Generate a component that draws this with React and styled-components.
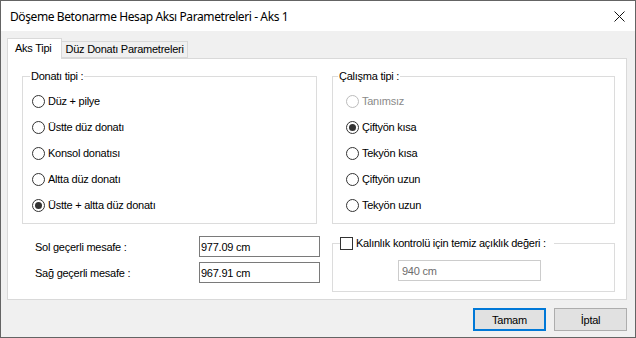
import React from "react";
import styled, { createGlobalStyle } from "styled-components";

const Global = createGlobalStyle`
  html, body { margin: 0; padding: 0; background: #ffffff; }
  * { box-sizing: border-box; }
`;

const Window = styled.div`
  width: 636px;
  height: 338px;
  border: 1px solid #646464;
  display: flex;
  flex-direction: column;
  background: #f0f0f0;
  font-family: "Liberation Sans", Arial, sans-serif;
  font-size: 11px;
  letter-spacing: -0.25px;
  color: #000;
`;

const TitleBar = styled.div`
  height: 30px;
  background: #fff;
  display: flex;
  align-items: center;
  justify-content: space-between;
  padding: 0 10px 0 9px;
`;

const Title = styled.span`
  font-family: "Noto Sans", "Liberation Sans", sans-serif;
  font-size: 12px;
  letter-spacing: -0.4px;
  color: #000;
  margin-top: 1px;
`;

const Body = styled.div`
  flex: 1;
  display: flex;
  flex-direction: column;
  padding: 7px 8px 6px 6px;
`;

const TabStrip = styled.div`
  display: flex;
  align-items: flex-end;
  height: 20px;
`;

const Tab = styled.div`
  position: relative;
  z-index: ${(p) => (p.$active ? 2 : 1)};
  height: ${(p) => (p.$active ? "21px" : "17px")};
  margin-bottom: ${(p) => (p.$active ? "-1px" : "0")};
  padding: ${(p) => (p.$active ? "3px 9px 0 7px" : "1px 3px 0 4px")};
  background: ${(p) => (p.$active ? "#fff" : "#f0f0f0")};
  border: 1px solid #d9d9d9;
  border-bottom: ${(p) => (p.$active ? "none" : "1px solid #d9d9d9")};
  border-left: ${(p) => (p.$first ? "1px solid #d9d9d9" : "none")};
  white-space: nowrap;
  line-height: 13px;
`;

const Panel = styled.div`
  height: 242px;
  background: #fff;
  border: 1px solid #d9d9d9;
  padding: 11px 11px 0 14px;
  display: grid;
  grid-template-columns: 295px 283px;
  grid-template-rows: 154px auto;
  column-gap: 15px;
  row-gap: 12px;
`;

const Group = styled.fieldset`
  margin: 0;
  padding: ${(p) => p.$pad || "6px 0 5px 0"};
  border: 1px solid #dcdcdc;
  min-width: 0;
  align-self: start;
`;

const Legend = styled.legend`
  margin-left: ${(p) => p.$ml || "6px"};
  padding: ${(p) => p.$pad || "0 1px"};
  line-height: ${(p) => p.$lh || "12px"};
  display: flex;
  align-items: center;
  gap: 3px;
`;

const RadioRow = styled.div`
  height: 26px;
  display: flex;
  align-items: center;
  padding-left: ${(p) => p.$indent}px;
  gap: 3px;
  color: ${(p) => (p.$disabled ? "#8a8a8a" : "#000")};
`;

const RadioCircle = styled.span`
  width: 13px;
  height: 13px;
  border-radius: 50%;
  border: 1px solid ${(p) => (p.$disabled ? "#bcbcbc" : "#333")};
  background: #fff;
  display: flex;
  align-items: center;
  justify-content: center;
  flex: none;
  &::after {
    content: "";
    width: 7px;
    height: 7px;
    border-radius: 50%;
    background: ${(p) => (p.$checked ? "#333" : "transparent")};
  }
`;

const CheckBox = styled.span`
  width: 13px;
  height: 13px;
  border: 1px solid #333;
  background: #fff;
  flex: none;
`;

const FieldRows = styled.div`
  display: flex;
  flex-direction: column;
  gap: 5px;
`;

const FieldRow = styled.div`
  display: grid;
  grid-template-columns: 164px 121px;
  align-items: center;
  padding-left: 13px;
`;

const TextBox = styled.div`
  height: 21px;
  width: ${(p) => p.$w || 121}px;
  margin-left: ${(p) => p.$ml || 0}px;
  border: 1px solid ${(p) => (p.$disabled ? "#cccccc" : "#7a7a7a")};
  background: #ffffff;
  color: ${(p) => (p.$disabled ? "#6d6d6d" : "#000")};
  display: flex;
  align-items: center;
  padding-left: ${(p) => p.$pl || 1}px;
`;

const CheckGroup = styled(Group)`
  height: 56px;
`;

const ButtonRow = styled.div`
  display: flex;
  justify-content: flex-end;
  gap: 8px;
  margin-top: 8px;
`;

const Button = styled.button`
  width: 73px;
  height: 23px;
  font: inherit;
  letter-spacing: inherit;
  color: #000;
  background: #e1e1e1;
  border: ${(p) => (p.$default ? "2px solid #0078d7" : "1px solid #adadad")};
  padding: 0;
  margin: 0;
`;

const CloseIcon = () => (
  <svg width="11" height="11" viewBox="0 0 11 11">
    <path d="M0.5 0.5 L10.5 10.5 M10.5 0.5 L0.5 10.5" stroke="#111" strokeWidth="1" fill="none" />
  </svg>
);

const donati = [
  "Düz + pilye",
  "Üstte düz donatı",
  "Konsol donatısı",
  "Altta düz donatı",
  "Üstte + altta düz donatı",
];

const calisma = [
  { t: "Tanımsız", disabled: true },
  { t: "Çiftyön kısa", checked: true },
  { t: "Tekyön kısa" },
  { t: "Çiftyön uzun" },
  { t: "Tekyön uzun" },
];

export default function App() {
  return (
    <>
      <Global />
      <Window>
        <TitleBar>
          <Title>Döşeme Betonarme Hesap Aksı Parametreleri - Aks 1</Title>
          <CloseIcon />
        </TitleBar>
        <Body>
          <TabStrip>
            <Tab $active $first>Aks Tipi</Tab>
            <Tab>Düz Donatı Parametreleri</Tab>
          </TabStrip>
          <Panel>
            <Group>
              <Legend $ml="7px">Donatı tipi :</Legend>
              {donati.map((t, i) => (
                <RadioRow key={t} $indent={9}>
                  <RadioCircle $checked={i === 4} />
                  <span>{t}</span>
                </RadioRow>
              ))}
            </Group>
            <Group>
              <Legend $ml="5px">Çalışma tipi :</Legend>
              {calisma.map((r) => (
                <RadioRow key={r.t} $indent={13} $disabled={r.disabled}>
                  <RadioCircle $checked={r.checked} $disabled={r.disabled} />
                  <span>{r.t}</span>
                </RadioRow>
              ))}
            </Group>
            <FieldRows>
              <FieldRow>
                <span>Sol geçerli mesafe :</span>
                <TextBox>977.09 cm</TextBox>
              </FieldRow>
              <FieldRow>
                <span>Sağ geçerli mesafe :</span>
                <TextBox>967.91 cm</TextBox>
              </FieldRow>
            </FieldRows>
            <CheckGroup $pad="10px 0 9px 0">
              <Legend $ml="7px" $pad="0 8px 0 0" $lh="14px">
                <CheckBox />
                <span>Kalınlık kontrolü için temiz açıklık değeri :</span>
              </Legend>
              <TextBox $disabled $w={143} $ml={65} $pl={3}>940 cm</TextBox>
            </CheckGroup>
          </Panel>
          <ButtonRow>
            <Button $default>Tamam</Button>
            <Button>İptal</Button>
          </ButtonRow>
        </Body>
      </Window>
    </>
  );
}
